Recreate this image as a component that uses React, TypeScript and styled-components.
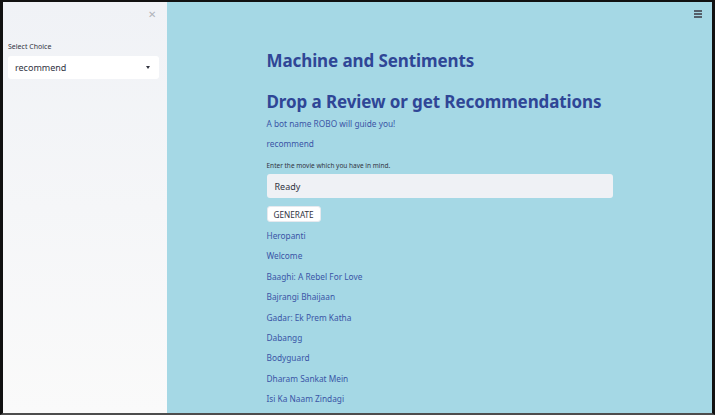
import React from "react";
import styled, { createGlobalStyle } from "styled-components";

const Global = createGlobalStyle`
  html, body { margin: 0; padding: 0; }
  body { font-family: "Noto Sans", "Liberation Sans", sans-serif; }
  * { box-sizing: border-box; }
`;

const Frame = styled.div`
  width: 715px;
  height: 415px;
  display: flex;
  border-style: solid;
  border-color: #111 #111 #4d4d4d #111;
  border-width: 2px 3px 2px 3px;
  overflow: hidden;
`;

const Sidebar = styled.aside`
  width: 164px;
  flex: none;
  background: linear-gradient(180deg, #f0f2f6 0%, #f5f6f8 50%, #fafafa 100%);
  padding: 0 8px 0 5px;
  display: flex;
  flex-direction: column;
`;

const CloseRow = styled.div`
  height: 24px;
  display: flex;
  justify-content: flex-end;
  align-items: center;
  padding-right: 3px;
  color: #b0b4ba;
  font-size: 10px;
`;

const FieldLabel = styled.label`
  display: block;
  margin-top: 16px;
  font-size: 7px;
  color: #31333f;
  line-height: 9px;
`;

const SelectBox = styled.div`
  margin-top: 5px;
  height: 23px;
  background: #fff;
  border-radius: 3px;
  display: flex;
  align-items: center;
  justify-content: space-between;
  padding: 0 9px 0 7px;
  font-size: 9px;
  color: #31333f;
`;

const Caret = styled.span`
  width: 0;
  height: 0;
  border-left: 2.5px solid transparent;
  border-right: 2.5px solid transparent;
  border-top: 3px solid #31333f;
`;

const Main = styled.main`
  flex: 1;
  position: relative;
  background: #a5d8e5;
`;

const Menu = styled.div`
  position: absolute;
  top: 8px;
  right: 10px;
  width: 8px;
  display: flex;
  flex-direction: column;
  gap: 1.5px;
  span { display: block; height: 1.5px; background: #55606b; }
`;

const Content = styled.div`
  width: 346px;
  margin: 0 auto;
  padding-top: 48px;
`;

const Title = styled.h1<{ $gap: number }>`
  margin: 0 0 ${(p) => p.$gap}px;
  font-size: 17px;
  line-height: 22px;
  font-weight: 700;
  letter-spacing: -0.1px;
  color: #2f4696;
  white-space: nowrap;
`;

const Text = styled.p`
  margin: 0 0 8px;
  font-size: 8.3px;
  line-height: 12px;
  color: #3a55a5;
`;

const SmallLabel = styled.div`
  font-size: 6.5px;
  color: #31333f;
  margin-top: 11px;
  line-height: 9px;
`;

const Input = styled.div`
  margin-top: 4px;
  height: 24px;
  background: #eff1f5;
  border-radius: 3px;
  display: flex;
  align-items: center;
  padding-left: 8px;
  font-size: 9px;
  color: #31333f;
`;

const Button = styled.button`
  margin-top: 8px;
  height: 16px;
  padding: 0 6px;
  background: #fff;
  border: 1px solid #e6e9ee;
  border-radius: 3px;
  font-family: inherit;
  font-size: 8.2px;
  color: #31333f;
  display: flex;
  align-items: center;
`;

const List = styled.ul`
  list-style: none;
  margin: 8px 0 0;
  padding: 0;
`;

const Item = styled.li`
  height: 20.4px;
  font-size: 8.3px;
  line-height: 12px;
  color: #3a55a5;
`;

const movies = [
  "Heropanti",
  "Welcome",
  "Baaghi: A Rebel For Love",
  "Bajrangi Bhaijaan",
  "Gadar: Ek Prem Katha",
  "Dabangg",
  "Bodyguard",
  "Dharam Sankat Mein",
  "Isi Ka Naam Zindagi",
];

export default function App() {
  return (
    <>
      <Global />
      <Frame>
        <Sidebar>
          <CloseRow>✕</CloseRow>
          <FieldLabel>Select Choice</FieldLabel>
          <SelectBox>
            recommend
            <Caret />
          </SelectBox>
        </Sidebar>
        <Main>
          <Menu>
            <span />
            <span />
            <span />
          </Menu>
          <Content>
            <Title $gap={19}>Machine and Sentiments</Title>
            <Title $gap={5}>Drop a Review or get Recommendations</Title>
            <Text>A bot name ROBO will guide you!</Text>
            <Text>recommend</Text>
            <SmallLabel>Enter the movie which you have in mind.</SmallLabel>
            <Input>Ready</Input>
            <Button>GENERATE</Button>
            <List>
              {movies.map((m) => (
                <Item key={m}>{m}</Item>
              ))}
            </List>
          </Content>
        </Main>
      </Frame>
    </>
  );
}
